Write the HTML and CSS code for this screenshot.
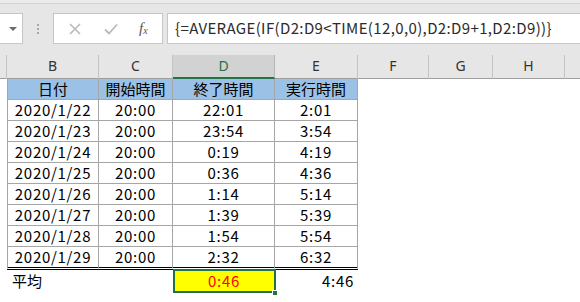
FILE: index.html
```html
<!DOCTYPE html>
<html lang="ja">
<head>
<meta charset="utf-8">
<link rel="stylesheet" href="styles.css">
</head>
<body>
<div class="chrome">
  <div class="topstrip"></div>
  <div class="fbar">
    <div class="namebox"><span class="arrow"></span></div>
    <div class="grip"><i></i><i></i><i></i></div>
    <div class="btns">
      <svg class="ico" width="14" height="14" viewBox="0 0 14 14"><path d="M2 2 L12 12 M12 2 L2 12" stroke="#b9b9b9" stroke-width="1.6" fill="none"/></svg>
      <svg class="ico" width="16" height="14" viewBox="0 0 16 14"><path d="M2 7.5 L6 11.5 L14 2.5" stroke="#b9b9b9" stroke-width="1.8" fill="none"/></svg>
      <span class="fx">f<sub>x</sub></span>
    </div>
    <div class="formula">{=AVERAGE(IF(D2:D9&lt;TIME(12,0,0),D2:D9+1,D2:D9))}</div>
  </div>
</div>
<div class="sheet">
  <div class="colhdr">
    <div class="ch stub"></div>
    <div class="ch">B</div>
    <div class="ch">C</div>
    <div class="ch sel">D</div>
    <div class="ch">E</div>
    <div class="ch">F</div>
    <div class="ch">G</div>
    <div class="ch">H</div>
    <div class="ch last"></div>
  </div>
  <div class="row head">
    <div class="c stub"></div>
    <div class="c t first">日付</div>
    <div class="c t">開始時間</div>
    <div class="c t">終了時間</div>
    <div class="c t">実行時間</div>
  </div>
  <div class="row"><div class="c stub"></div><div class="c t first">2020/1/22</div><div class="c t">20:00</div><div class="c t">22:01</div><div class="c t">2:01</div></div>
  <div class="row"><div class="c stub"></div><div class="c t first">2020/1/23</div><div class="c t">20:00</div><div class="c t">23:54</div><div class="c t">3:54</div></div>
  <div class="row"><div class="c stub"></div><div class="c t first">2020/1/24</div><div class="c t">20:00</div><div class="c t">0:19</div><div class="c t">4:19</div></div>
  <div class="row"><div class="c stub"></div><div class="c t first">2020/1/25</div><div class="c t">20:00</div><div class="c t">0:36</div><div class="c t">4:36</div></div>
  <div class="row"><div class="c stub"></div><div class="c t first">2020/1/26</div><div class="c t">20:00</div><div class="c t">1:14</div><div class="c t">5:14</div></div>
  <div class="row"><div class="c stub"></div><div class="c t first">2020/1/27</div><div class="c t">20:00</div><div class="c t">1:39</div><div class="c t">5:39</div></div>
  <div class="row"><div class="c stub"></div><div class="c t first">2020/1/28</div><div class="c t">20:00</div><div class="c t">1:54</div><div class="c t">5:54</div></div>
  <div class="row lastrow"><div class="c stub"></div><div class="c t first">2020/1/29</div><div class="c t">20:00</div><div class="c t">2:32</div><div class="c t">6:32</div></div>
  <div class="row avg">
    <div class="c stub"></div>
    <div class="c left">平均</div>
    <div class="c"></div>
    <div class="c active num"><span class="red">0:46</span><span class="handle"></span></div>
    <div class="c right num">4:46</div>
  </div>
</div>
</body>
</html>
```

FILE: styles.css
```css
* { box-sizing: border-box; }
html, body { margin: 0; padding: 0; }
body {
  width: 580px;
  height: 302px;
  overflow: hidden;
  background: #ffffff;
  font-family: "Noto Sans CJK JP", "Noto Sans", sans-serif;
  color: #000;
}
.chrome {
  height: 55px;
  background: #e6e6e6;
}
.topstrip {
  height: 4px;
  background: #ececec;
  border-bottom: 1px solid #d3d3d3;
}
.fbar {
  display: flex;
  align-items: stretch;
  margin-top: 9px;
  height: 31px;
}
.namebox {
  width: 23px;
  background: #fff;
  border: 1px solid #c6c6c6;
  border-left: none;
  position: relative;
}
.arrow {
  position: absolute;
  left: 9px;
  top: 13px;
  width: 0; height: 0;
  border-left: 4px solid transparent;
  border-right: 4px solid transparent;
  border-top: 4px solid #6a6a6a;
}
.grip {
  width: 30px;
  display: flex;
  flex-direction: column;
  align-items: center;
  justify-content: center;
  gap: 2px;
}
.grip i {
  display: block;
  width: 2px; height: 2px;
  background: #a9a9a9;
}
.btns {
  width: 110px;
  background: #fff;
  border: 1px solid #c6c6c6;
  display: flex;
  align-items: center;
  padding-left: 14px;
}
.btns .ico:nth-child(1) { margin-right: 21px; }
.btns .ico:nth-child(2) { margin-right: 20px; }
.fx {
  font-family: "Liberation Serif", serif;
  font-style: italic;
  font-size: 15px;
  color: #555;
  line-height: 1;
}
.fx sub { font-size: 10px; vertical-align: -1px; }
.formula {
  flex: 1;
  margin-left: 4px;
  background: #fff;
  border: 1px solid #c6c6c6;
  border-right: none;
  font-size: 15px;
  color: #2b2b2b;
  padding-left: 7px;
  line-height: 28px;
  white-space: nowrap;
  letter-spacing: 0.37px;
}
.colhdr, .row {
  display: grid;
  grid-template-columns: 7px 92px 74px 102px 83px 71px 64px 72px 1fr;
}
.colhdr {
  height: 24px;
  background: #e6e6e6;
  border-bottom: 1px solid #9e9e9e;
}
.ch {
  border-right: 1px solid #c3c3c3;
  font-size: 14px;
  color: #333;
  text-align: center;
  line-height: 22px;
  font-family: "Noto Sans", sans-serif;
}
.ch.last { border-right: none; }
.ch.sel {
  background: #d2d2d2;
  color: #217346;
  border-bottom: 2px solid #217346;
  border-right-color: #b5b5b5;
}
.row {
  height: 21px;
}
.c {
  font-size: 15px;
  line-height: 20px;
  white-space: nowrap;
  letter-spacing: 0.7px;
}
.head .c { letter-spacing: 0; }
.c.t {
  border-right: 1px solid #a6a6a6;
  border-bottom: 1px solid #a6a6a6;
  text-align: center;
}
.c.first { border-left: 1px solid #a6a6a6; }
.head .c.t { background: #9bc2e6; }
.lastrow { height: 23px; }
.lastrow .c.t { border-bottom: 3px double #000; }
.avg { height: 22px; }
.avg .c { line-height: 21px; }
.c.left { padding-left: 5px; letter-spacing: 0; }
.c.right { text-align: right; padding-right: 4px; }
.c.active {
  position: relative;
  background: #ffff00;
  text-align: center;
}
.c.active::after {
  content: "";
  position: absolute;
  left: 0; top: -1px; right: -1px; bottom: -1px;
  border: 2px solid #217346;
}
.red { color: #ff0000; }
.handle {
  position: absolute;
  right: -3px;
  bottom: -4px;
  width: 6px; height: 6px;
  background: #217346;
  border: 1px solid #fff;
  z-index: 2;
}
```
